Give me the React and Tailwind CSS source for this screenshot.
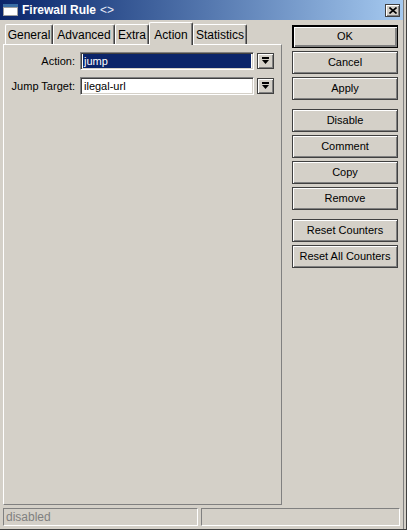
import React from "react";

const font = "font-['Liberation_Sans',Arial,sans-serif]";

// classic raised bevel
const raised =
  "border border-[#404040] shadow-[inset_1px_1px_#ffffff,inset_-1px_-1px_#808080]";
const sunken =
  "border-t border-l border-[#808080] border-b-white border-r-white border-b border-r shadow-[inset_1px_1px_#404040,inset_-1px_-1px_#d4d0c8]";

function DropArrow() {
  return (
    <svg width="7" height="8" viewBox="0 0 7 8">
      <rect x="0" y="0" width="7" height="2" fill="#000" />
      <polygon points="0,3 7,3 3.5,7" fill="#000" />
    </svg>
  );
}

function Button({ label, isDefault }) {
  return (
    <button
      className={
        "h-[23px] w-full flex items-center justify-center text-[11px] text-black bg-[#d4d0c8] " +
        (isDefault
          ? "border border-black shadow-[inset_1px_1px_#000,inset_2px_2px_#ffffff,inset_-2px_-2px_#808080]"
          : raised)
      }
    >
      {label}
    </button>
  );
}

function Field({ label, value, selected }) {
  return (
    <div className="flex items-center h-[18px]">
      <div className="w-[71px] text-right text-[11px] text-black">{label}</div>
      <div className={"ml-[5px] w-[174px] h-[18px] bg-white flex items-center " + sunken}>
        <div
          className={
            "mx-[2px] h-[14px] flex-1 flex items-center px-[1px] text-[11px] " +
            (selected ? "bg-[#0a246a] text-white" : "text-black")
          }
        >
          {value}
        </div>
      </div>
      <div className={"ml-[3px] w-[17px] h-[16px] flex items-center justify-center bg-[#d4d0c8] " + raised}>
        <DropArrow />
      </div>
    </div>
  );
}

const tabs = [
  { name: "General", w: "w-[48px]" },
  { name: "Advanced", w: "w-[62px]" },
  { name: "Extra", w: "w-[34px]" },
  { name: "Action", w: "w-[44px]", active: true },
  { name: "Statistics", w: "w-[54px]" },
];

export default function App() {
  return (
    <div className={"w-[407px] h-[530px] bg-[#d4d0c8] flex flex-col relative " + font}>
      {/* title bar */}
      <div className="h-[20px] mr-[4px] flex items-center bg-gradient-to-r from-[#0a246a] to-[#a6caf0]">
        <div className="ml-[3px] w-[15px] h-[12px] bg-white border-t-[3px] border-[#3a6ea5] shadow-[inset_0_0_0_1px_#a0a0a0]" />
        <div className="ml-[4px] text-[12px] font-bold text-white">Firewall Rule</div>
        <div className="ml-[4px] text-[12px] text-[#e8ecf8]">&lt;&gt;</div>
        <div className="flex-1" />
        <div className={"mr-[3px] w-[15px] h-[13px] flex items-center justify-center bg-[#d4d0c8] " + raised}>
          <svg width="8" height="7" viewBox="0 0 8 7">
            <path d="M0.5 0.5 L7.5 6.5 M7.5 0.5 L0.5 6.5" stroke="#000" strokeWidth="1.6" />
          </svg>
        </div>
      </div>

      {/* main */}
      <div className="flex-1 flex min-h-0">
        <div className="ml-[3px] w-[279px] flex flex-col pt-[2px]">
          <div className="flex items-end h-[22px] pl-[2px]">
            {tabs.map((t) =>
              t.active ? (
                <div
                  key={t.name}
                  className={
                    t.w +
                    " h-[23px] -mb-[1px] relative z-10 bg-[#d4d0c8] border-t border-l border-white border-r border-r-[#404040] rounded-t-[2px] shadow-[inset_-1px_0_#808080] flex items-start justify-center pt-[3px] text-[12px] text-black"
                  }
                >
                  {t.name}
                </div>
              ) : (
                <div
                  key={t.name}
                  className={
                    t.w +
                    " h-[20px] bg-[#d4d0c8] border-t border-l border-white border-r border-r-[#404040] rounded-t-[2px] shadow-[inset_-1px_0_#808080] flex items-center justify-center text-[12px] text-black"
                  }
                >
                  {t.name}
                </div>
              )
            )}
          </div>
          <div className="flex-1 border-t border-l border-white border-r border-b border-r-[#808080] border-b-[#808080] pt-[7px] flex flex-col gap-[7px]">
            <Field label="Action:" value="jump" selected />
            <Field label="Jump Target:" value="ilegal-url" />
          </div>
        </div>

        <div className="ml-[10px] w-[106px] pt-[5px] flex flex-col">
          <div className="flex flex-col gap-[3px]">
            <Button label="OK" isDefault />
            <Button label="Cancel" />
            <Button label="Apply" />
          </div>
          <div className="flex flex-col gap-[3px] mt-[9px]">
            <Button label="Disable" />
            <Button label="Comment" />
            <Button label="Copy" />
            <Button label="Remove" />
          </div>
          <div className="flex flex-col gap-[3px] mt-[9px]">
            <Button label="Reset Counters" />
            <Button label="Reset All Counters" />
          </div>
        </div>
      </div>

      {/* status bar */}
      <div className="mt-[3px] mb-[4px] ml-[3px] flex gap-[3px] h-[18px]">
        <div className="w-[195px] border-t border-l border-[#808080] border-b border-r border-b-white border-r-white flex items-center pl-[2px] text-[12px] text-[#808080]">
          disabled
        </div>
        <div className="w-[199px] border-t border-l border-[#808080] border-b border-r border-b-white border-r-white" />
      </div>

      {/* window right/bottom frame */}
      <div className="absolute right-0 top-0 bottom-0 w-[4px] border-l border-[#808080] bg-[#d4d0c8] shadow-[inset_-1px_0_#404040]" />
      <div className="absolute left-0 right-0 bottom-0 h-[1px] bg-[#404040]" />
    </div>
  );
}
